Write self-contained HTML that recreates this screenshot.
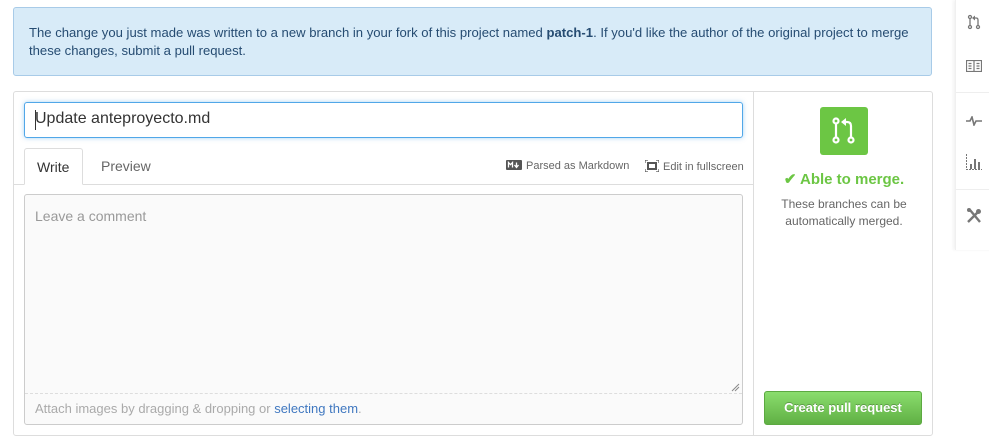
<!DOCTYPE html>
<html><head><meta charset="utf-8">
<style>
*{box-sizing:border-box;margin:0;padding:0}
body{width:989px;height:444px;background:#fff;font-family:"Liberation Sans",Helvetica,Arial,sans-serif;position:relative;overflow:hidden;color:#333}
.flash{position:absolute;left:13px;top:7px;width:919px;height:69px;background:#d8ebf8;border:1px solid #a8cbe8;border-radius:3px;padding:16px 15px;font-size:13.1px;line-height:18px;color:#264c72}
.form{position:absolute;left:13px;top:91px;width:920px;height:345px;border:1px solid #ddd;border-radius:3px}
.title{position:absolute;left:10px;top:10px;width:719px;height:36px;border:1px solid #51a7e8;border-radius:3px;box-shadow:0 0 5px rgba(81,167,232,.5);font-size:16px;padding:7px 10px;color:#333}
.title i{position:absolute;left:10px;top:7px;width:1px;height:20px;background:#333}
.tabline{position:absolute;left:0;top:92px;width:740px;height:1px;background:#ddd}
.tab{position:absolute;top:56px;height:37px;font-size:14px;padding:10px 12px}
.tab.w{left:10px;width:59px;border:1px solid #ddd;border-bottom:1px solid #fff;border-radius:3px 3px 0 0;background:#fff;z-index:2;color:#333}
.tab.p{left:75px;color:#666}
.tools{position:absolute;top:68px;font-size:11px;color:#666}
.ta{position:absolute;left:10px;top:102px;width:719px;height:231px;border:1px solid #ccc;border-radius:3px;background:#fafafa}
.ta .ph{position:absolute;left:10px;top:13px;font-size:14px;color:#999}
.ta .dash{position:absolute;left:0;right:0;top:198px;border-top:1px dashed #ddd}
.ta .at{position:absolute;left:10px;top:206px;font-size:13px;color:#aaa}
.ta .at a{color:#4078c0;text-decoration:none}
.side{position:absolute;left:739px;top:0;width:1px;height:343px;background:#ddd}
.ico{position:absolute;left:806px;top:15px;width:48px;height:48px;background:#6cc644;border-radius:3px}
.able{position:absolute;left:740px;width:180px;top:78px;text-align:center;font-size:15px;font-weight:bold;color:#6cc644}
.desc{position:absolute;left:740px;width:180px;top:104px;text-align:center;font-size:12px;line-height:17px;color:#666}
.btn{position:absolute;left:750px;top:299px;width:158px;height:34px;border:1px solid #5ca941;border-radius:3px;background:linear-gradient(#8add6d,#60b044);color:#fff;font-weight:bold;font-size:13px;text-align:center;line-height:32px;text-shadow:0 -1px 0 rgba(0,0,0,.25)}
.nav{position:absolute;left:955px;top:0;width:40px;height:250px;background:#fff;box-shadow:-2px 0 3px rgba(0,0,0,.05);border-left:1px solid #f0f0f0}
.nav .sep{position:absolute;left:0;right:0;height:1px;background:#eee}
.nav svg{position:absolute}
</style></head><body>
<div class="flash">The change you just made was written to a new branch in your fork of this project named <b>patch-1</b>. If you'd like the author of the original project to merge these changes, submit a pull request.</div>
<div class="form">
 <div class="title"><i></i>Update anteproyecto.md</div>
 <div class="tabline"></div>
 <div class="tab w">Write</div>
 <div class="tab p">Preview</div>
 <div class="tools" style="left:492px"><svg width="16" height="10" style="vertical-align:-1px;margin-right:4px"><rect width="16" height="10" rx="1" fill="#555"/><path d="M2.5 7.5V2.5l2 2.2 2-2.2v5M10.5 2.5v4M8.5 5l2 2.5 2-2.5" stroke="#fff" stroke-width="1.3" fill="none"/></svg>Parsed as Markdown</div>
 <div class="tools" style="left:631px"><svg width="14" height="12" style="vertical-align:-2px;margin-right:4px"><path d="M0 3V0h3M11 0h3v3M14 9v3h-3M3 12H0V9" stroke="#555" stroke-width="1.2" fill="none"/><rect x="3" y="3" width="8" height="6" fill="none" stroke="#555" stroke-width="2"/></svg>Edit in fullscreen</div>
 <div class="ta"><div class="ph">Leave a comment</div><div class="dash"></div><div class="at">Attach images by dragging &amp; dropping or <a>selecting them</a>.</div>
 <svg width="10" height="10" style="position:absolute;right:2px;top:187px"><path d="M9 2L2 9M9 5L5 9" stroke="#888" stroke-width="1"/></svg></div>
 <div class="side"></div>
 <div class="ico"><svg width="48" height="48"><g stroke="#fff" stroke-width="2.2" fill="none"><circle cx="16" cy="14" r="2.5"/><circle cx="16" cy="33" r="2.5"/><circle cx="31" cy="33" r="2.5"/><path d="M16 16.5v14M31 30.5V19q0-4-4-4h-3"/></g><path d="M21 15l5-4v8z" fill="#fff"/></svg></div>
 <div class="able">&#10004; Able to merge.</div>
 <div class="desc">These branches can be<br>automatically merged.</div>
 <div class="btn">Create pull request</div>
</div>
<div class="nav">
 <svg width="14" height="16" style="left:11px;top:14px"><g stroke="#777" stroke-width="1.3" fill="none"><circle cx="3" cy="3" r="1.5"/><circle cx="3" cy="13" r="1.5"/><circle cx="11" cy="13" r="1.5"/><path d="M3 4.5v7M11 11.5V6q0-2-2-2H7"/></g><path d="M5 4l3-2.5v5z" fill="#777"/></svg>
 <svg width="16" height="12" style="left:10px;top:60px"><g stroke="#777" stroke-width="1.2" fill="none"><rect x="0.5" y="0.5" width="15" height="11"/><path d="M8 0.5v11M2.5 3.5h3M2.5 6h3M2.5 8.5h3M10.5 3.5h3M10.5 6h3M10.5 8.5h3"/></g></svg>
 <div class="sep" style="top:92px"></div>
 <svg width="16" height="10" style="left:10px;top:116px"><path d="M0 5h4l2-4 2 8 2-4h6" stroke="#777" stroke-width="1.6" fill="none"/></svg>
 <svg width="16" height="16" style="left:10px;top:154px"><path d="M0.5 0v15.5H16" stroke="#777" stroke-width="1" stroke-dasharray="2 1" fill="none"/><rect x="4" y="10" width="2" height="5" fill="#777"/><rect x="8" y="5" width="2" height="10" fill="#777"/><rect x="12" y="8" width="2" height="7" fill="#777"/></svg>
 <div class="sep" style="top:189px"></div>
 <svg width="16" height="16" style="left:10px;top:208px"><path d="M2 14L12 4M4 2l10 12" stroke="#777" stroke-width="2.4" fill="none"/><circle cx="12.5" cy="3.5" r="2.5" fill="#777"/><circle cx="3" cy="2" r="2" fill="#777"/></svg>
</div>
</body></html>
